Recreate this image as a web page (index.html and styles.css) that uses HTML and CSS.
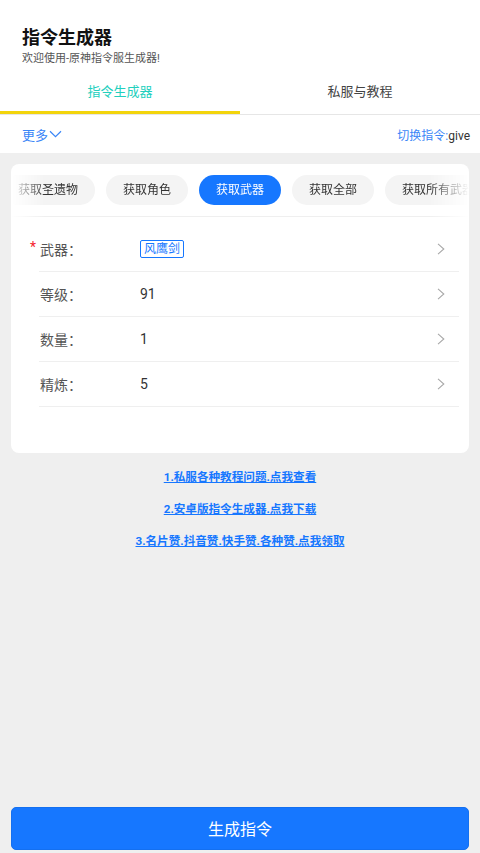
FILE: index.html
```html
<!DOCTYPE html>
<html lang="zh-CN">
<head>
<meta charset="utf-8">
<meta name="viewport" content="width=device-width, initial-scale=1">
<title>指令生成器</title>
<link rel="stylesheet" href="styles.css">
</head>
<body>
<div class="page">
  <div class="top">
    <div class="header">
      <div class="title">指令生成器</div>
      <div class="subtitle">欢迎使用-原神指令服生成器!</div>
    </div>
    <div class="tabs">
      <div class="tab active">指令生成器</div>
      <div class="tab">私服与教程</div>
    </div>
    <div class="subbar">
      <div class="more">更多<svg class="more-icon" width="13" height="8" viewBox="0 0 13 8"><path d="M1 1.2 L6.5 6.6 L12 1.2" fill="none" stroke="#3a86f7" stroke-width="1.2"/></svg></div>
      <div class="switch"><span class="switch-label">切换指令:</span><span class="switch-cmd">give</span></div>
    </div>
  </div>
  <div class="main">
    <div class="card">
      <div class="chips-wrap">
        <div class="chips">
          <div class="chip">获取圣遗物</div>
          <div class="chip">获取角色</div>
          <div class="chip active">获取武器</div>
          <div class="chip">获取全部</div>
          <div class="chip">获取所有武器</div>
        </div>
      </div>
      <div class="form">
        <div class="row">
          <div class="label"><span class="star">*</span>武器：</div>
          <div class="value"><span class="tag">风鹰剑</span></div>
          <svg class="arrow" width="8" height="12" viewBox="0 0 8 12"><path d="M1 0.8 L6.8 6 L1 11.2" fill="none" stroke="#a8a8a8" stroke-width="1.1"/></svg>
        </div>
        <div class="row">
          <div class="label">等级：</div>
          <div class="value">91</div>
          <svg class="arrow" width="8" height="12" viewBox="0 0 8 12"><path d="M1 0.8 L6.8 6 L1 11.2" fill="none" stroke="#a8a8a8" stroke-width="1.1"/></svg>
        </div>
        <div class="row">
          <div class="label">数量：</div>
          <div class="value">1</div>
          <svg class="arrow" width="8" height="12" viewBox="0 0 8 12"><path d="M1 0.8 L6.8 6 L1 11.2" fill="none" stroke="#a8a8a8" stroke-width="1.1"/></svg>
        </div>
        <div class="row">
          <div class="label">精炼：</div>
          <div class="value">5</div>
          <svg class="arrow" width="8" height="12" viewBox="0 0 8 12"><path d="M1 0.8 L6.8 6 L1 11.2" fill="none" stroke="#a8a8a8" stroke-width="1.1"/></svg>
        </div>
      </div>
    </div>
    <div class="links">
      <a class="link" href="#">1.私服各种教程问题.点我查看</a>
      <a class="link" href="#">2.安卓版指令生成器.点我下载</a>
      <a class="link" href="#">3.名片赞.抖音赞.快手赞.各种赞.点我领取</a>
    </div>
    <button class="submit" type="button">生成指令</button>
  </div>
</div>
</body>
</html>
```

FILE: styles.css
```css
* { box-sizing: border-box; }
html, body { margin: 0; padding: 0; }
body {
  background: #efefef;
  font-family: Roboto, "Noto Sans CJK SC", "Noto Sans", sans-serif;
  color: #333;
}
.page {
  min-height: 100vh;
  display: flex;
  flex-direction: column;
}
.top { background: #fff; }
.header { padding: 27px 22px 0; }
.title {
  font-size: 18px;
  font-weight: 700;
  line-height: 21px;
  color: #111;
}
.subtitle {
  margin-top: 4px;
  font-size: 11px;
  line-height: 14px;
  color: #555;
}
.tabs {
  margin-top: 7px;
  display: flex;
  border-bottom: 1px solid #e6e6e6;
}
.tab {
  flex: 1;
  text-align: center;
  font-size: 13px;
  line-height: 38px;
  color: #444;
  border-bottom: 3px solid transparent;
}
.tab.active {
  color: #22cfbd;
  border-bottom-color: #f2d40c;
}
.subbar {
  height: 38px;
  display: flex;
  align-items: center;
  justify-content: space-between;
  padding: 0 10px 0 22px;
}
.more {
  display: flex;
  align-items: center;
  font-size: 13px;
  color: #3a86f7;
}
.more-icon { margin-left: 1px; }
.switch { font-size: 12px; }
.switch-label { color: #3a86f7; }
.switch-cmd { color: #333; }
.main {
  flex: 1;
  display: flex;
  flex-direction: column;
  padding: 11px 11px 3px;
}
.card {
  background: #fff;
  border-radius: 8px;
  overflow: hidden;
}
.chips-wrap {
  overflow: hidden;
  padding: 11px 0;
  border-bottom: 1px solid #efefef;
  -webkit-mask-image: linear-gradient(to right, transparent 0, #000 34px, #000 calc(100% - 40px), transparent 100%);
  mask-image: linear-gradient(to right, transparent 0, #000 34px, #000 calc(100% - 40px), transparent 100%);
}
.chips {
  display: flex;
  gap: 11px;
  margin-left: -10px;
}
.chip {
  flex-shrink: 0;
  height: 30px;
  line-height: 30px;
  padding: 0 17px;
  border-radius: 15px;
  background: #f4f4f4;
  font-size: 12px;
  color: #333;
  white-space: nowrap;
}
.chip.active {
  background: #1677ff;
  color: #fff;
}
.form { padding: 10px 10px 46px 28px; }
.row {
  height: 45px;
  display: flex;
  align-items: center;
  border-bottom: 1px solid #efefef;
}
.label {
  position: relative;
  width: 101px;
  padding-left: 1px;
  font-size: 14px;
  color: #555;
}
.star {
  position: absolute;
  left: -9px;
  top: 0;
  color: #f5222d;
  font-size: 14px;
}
.value {
  flex: 1;
  font-size: 14px;
  color: #333;
}
.tag {
  display: inline-block;
  border: 1px solid #1677ff;
  border-radius: 2px;
  color: #1677ff;
  font-size: 12px;
  line-height: 16px;
  padding: 0 3px;
}
.arrow { margin-right: 14px; }
.links {
  margin-top: 16px;
  display: flex;
  flex-direction: column;
  align-items: center;
  gap: 16px;
}
.link {
  font-size: 11.6px;
  line-height: 16px;
  font-weight: 700;
  color: #1677ff;
  text-decoration: underline;
}
.submit {
  margin-top: auto;
  height: 43px;
  width: 100%;
  border: 1px solid #1470f0;
  border-radius: 5px;
  background: #1677ff;
  color: #fff;
  font-size: 16px;
  font-family: inherit;
  padding: 0 0 2px;
}
```
